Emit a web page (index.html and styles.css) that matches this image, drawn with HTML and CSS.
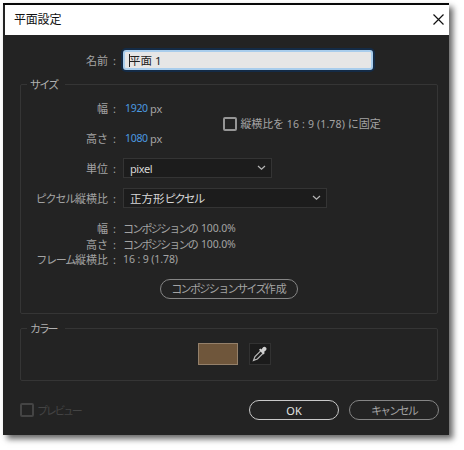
FILE: index.html
```html
<!DOCTYPE html>
<html lang="ja">
<head>
<meta charset="utf-8">
<title>平面設定</title>
<link rel="stylesheet" href="styles.css">
</head>
<body>
<main class="dialog">
  <header class="titlebar">
    <h1>平面設定</h1>
    <svg class="close" viewBox="0 0 11 11"><path d="M.5 .5l10 10M10.5 .5l-10 10"/></svg>
  </header>
  <div class="row name-row"><span class="label">名前</span><span class="colon">:</span><div class="name-input"><span class="caret"></span>平面 1</div></div>
  <section class="group size-group">
    <h2 class="legend kana">サイズ</h2>
    <div class="dimensions">
      <div>
        <div class="row tall"><span class="label">幅</span><span class="colon">:</span><span class="number">1920</span><span class="px">px</span></div>
        <div class="row tall"><span class="label">高さ</span><span class="colon">:</span><span class="number">1080</span><span class="px">px</span></div>
      </div>
      <div class="lock"><span class="checkbox"></span><span class="lock-text">縦横比を<span class="latin"> 16 : 9 (1.78) </span>に固定</span></div>
    </div>
    <div class="row tall"><span class="label">単位</span><span class="colon">:</span><div class="select unit"><span class="unit-text">pixel</span><svg class="chevron" viewBox="0 0 9 6"><path d="M1 1l3.5 3.3L8 1"/></svg></div></div>
    <div class="row tall"><span class="label"><span class="kana wide">ピクセル</span>縦横比</span><span class="colon">:</span><div class="select aspect"><span class="aspect-text">正方形<span class="kana">ピクセル</span></span><svg class="chevron" viewBox="0 0 9 6"><path d="M1 1l3.5 3.3L8 1"/></svg></div></div>
    <div class="info">
      <div class="row"><span class="label">幅</span><span class="colon">:</span><span class="kana">コンポジションの</span><span class="percent">100.0%</span></div>
      <div class="row"><span class="label">高さ</span><span class="colon">:</span><span class="kana">コンポジションの</span><span class="percent">100.0%</span></div>
      <div class="row"><span class="label"><span class="kana wide">フレーム</span>縦横比</span><span class="colon">:</span><span class="latin">16 : 9 (1.78)</span></div>
    </div>
    <div class="button comp"><span class="kana">コンポジションサイズ</span>作成</div>
  </section>
  <section class="group color-group">
    <h2 class="legend kana">カラー</h2>
    <div class="swatch"></div>
    <div class="picker"><svg viewBox="0 0 16 16"><path class="tube" d="M9 4.6L3 10.6 1.5 14.4 5.4 13l6-6z"/><path class="bulb" d="M7 3.8l1.4-1.2 1 .8 1.7-2.1c1.8-1.8 4.6.8 2.9 2.9l-2 1.7.8 1.2-1.4 1.3z"/></svg></div>
  </section>
  <footer class="footer">
    <span class="checkbox off"></span><span class="preview">プレビュー</span>
    <div class="button ok">OK</div><div class="button cancel kana">キャンセル</div>
  </footer>
</main>
</body>
</html>
```
FILE: styles.css
```css
* { box-sizing: border-box; }
html { background: #fff; }
body {
  height: 450px;
  margin: 0;
  padding: 3px 0 0 3px;
  color: #a3a3a3;
  font: 11px/15px "Noto Sans", "Noto Sans CJK JP", sans-serif;
  white-space: nowrap;
}
h1, h2 { margin: 0; font-weight: 400; }
.dialog {
  width: 446px;
  height: 432px;
  background: #232323;
  border-top: 2px solid #080808;
  box-shadow: 4px 4px 6px 0 rgba(0, 0, 0, .6);
}
.titlebar {
  display: flex;
  align-items: center;
  justify-content: space-between;
  height: 30px;
  margin-left: 2px;
  padding: 0 5px 0 9px;
  background: #fff;
  color: #111;
}
.titlebar h1 { font-size: 12px; line-height: 30px; letter-spacing: -.2px; }
.close { width: 11px; height: 11px; margin-top: -1px; }
.close path { fill: none; stroke: #111; stroke-width: 1.2; }
.row { display: flex; align-items: center; height: 15.5px; }
.label { width: 105px; text-align: right; }
.colon { width: 15px; padding-left: 5px; }
.kana { letter-spacing: -1.75px; }
.wide { letter-spacing: -1.2px; }
.latin { font-size: 10.5px; letter-spacing: -.1px; white-space: pre; }
.name-row { height: 20px; margin-top: 15px; }
.name-input {
  display: flex;
  align-items: center;
  width: 250px;
  height: 20px;
  padding: 0 4px;
  border: 2px solid #a9cdec;
  border-radius: 3px;
  box-shadow: 0 0 0 2px #142b46;
  background: #e6e6e6;
  color: #202020;
  font-size: 11.5px;
}
.caret { width: 1px; height: 13px; margin-right: -1px; background: #222; }
.group { margin: 0 11px 0 17px; border: 1px solid #353535; border-radius: 2px; }
.legend { width: max-content; padding: 0 8px 0 3px; background: #232323; font-size: 11px; line-height: 16px; color: #b0b0b0; }
.size-group { height: 230px; margin-top: 14px; }
.size-group .legend { margin: -8px 0 0 6px; }
.size-group .row { margin-left: -18px; }
.dimensions { display: flex; align-items: center; }
.size-group .tall { height: 30px; }
.number { width: 22px; margin-left: 2px; color: #4b9ae0; font-size: 10.5px; letter-spacing: -.3px; }
.px { margin-left: 3px; }
.lock { display: flex; align-items: center; gap: 3px; margin: 2px 0 0 61px; }
.checkbox { width: 14px; height: 14px; border: 2px solid #969696; border-radius: 2px; }
.lock-text { letter-spacing: -.1px; }
.lock-text .latin { letter-spacing: .15px; }
.select {
  display: flex;
  align-items: center;
  justify-content: space-between;
  height: 20px;
  padding: 0 5px 0 6px;
  border: 1px solid #343434;
  background: #1c1c1c;
  color: #d6d6d6;
}
.unit { width: 149px; }
.unit-text { letter-spacing: -.4px; }
.aspect { width: 204px; }
.aspect-text { font-size: 11.5px; }
.chevron { width: 9px; height: 6px; }
.chevron path { fill: none; stroke: #b5b5b5; stroke-width: 1.2; }
.info { margin-top: 8px; }
.percent { margin-left: 4px; font-size: 10.5px; letter-spacing: -.15px; }
.button {
  display: flex;
  align-items: center;
  justify-content: center;
  height: 20px;
  border: 1px solid #858585;
  border-radius: 10px;
}
.comp { width: 138px; margin: 11px 0 0 139px; }
.comp .kana { letter-spacing: -1.6px; }
.color-group { display: flex; height: 53px; margin-top: 14px; }
.color-group .legend { width: 38px; height: 16px; margin: -8px 0 0 6px; letter-spacing: -2.2px; }
.swatch { width: 40px; height: 22px; margin: 14px 0 0 133px; border: 1px solid #94806a; background: #6f563b; }
.picker { display: flex; align-items: center; justify-content: center; width: 22px; height: 22px; margin: 14px 0 0 11px; border: 1px solid #323232; background: #1b1b1b; }
.picker svg { width: 16px; height: 16px; }
.tube { fill: none; stroke: #b8b8b8; stroke-width: 1.2; }
.bulb { fill: #d0d0d0; }
.footer { display: flex; align-items: center; height: 20px; margin: 19px 10px 0 17px; }
.off { border-color: #444; }
.preview { margin-left: 3px; color: #444; letter-spacing: -2.3px; }
.ok { width: 90px; margin-left: auto; border: 1.5px solid #c8c8c8; color: #e4e4e4; }
.cancel { width: 90px; margin-left: 10px; }
```
